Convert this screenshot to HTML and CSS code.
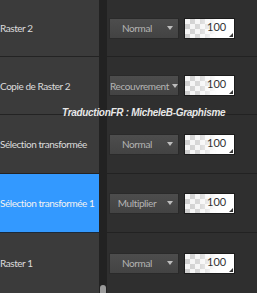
FILE: index.html
```html
<!DOCTYPE html>
<html lang="fr">
<head>
  <meta charset="UTF-8">
  <title>Calques</title>
  <link rel="stylesheet" href="styles.css">
</head>
<body>
  <div class="layers">
    <div class="names">
      <div class="name row1">Raster 2</div>
      <div class="name row2">Copie de Raster 2</div>
      <div class="name row3">Sélection transformée</div>
      <div class="name row4 selected">Sélection transformée 1</div>
      <div class="name row5">Raster 1</div>
    </div>

    <div class="strip">
      <div class="thumb"></div>
    </div>

    <div class="props">
      <div class="prop row1">
        <div class="blend"><span>Normal</span><i></i></div>
        <div class="opacity">100<b></b></div>
      </div>
      <div class="prop row2">
        <div class="blend"><span>Recouvrement</span><i></i></div>
        <div class="opacity">100<b></b></div>
      </div>
      <div class="prop row3">
        <div class="blend"><span>Normal</span><i></i></div>
        <div class="opacity">100<b></b></div>
      </div>
      <div class="prop row4">
        <div class="blend"><span>Multiplier</span><i></i></div>
        <div class="opacity">100<b></b></div>
      </div>
      <div class="prop row5">
        <div class="blend"><span>Normal</span><i></i></div>
        <div class="opacity">100<b></b></div>
      </div>
    </div>

    <div class="credit">TraductionFR : MicheleB-Graphisme</div>
  </div>
</body>
</html>
```

FILE: styles.css
```css
body {
  margin: 0;
  background-color: #2f2f2f;
  font-family: 'Lato', sans-serif;
  overflow: hidden;
}
.layers {
  position: relative;
  display: flex;
  width: 257px;
  height: 293px;
}
.names {
  width: 99px;
  background-color: #3b3b3b;
}
.strip {
  position: relative;
  width: 8px;
  background-color: #222;
}
.props {
  flex: 1;
  background-color: #2f2f2f;
}
.row1 { height: 56px; }
.row2 { height: 57px; }
.row3 { height: 58px; }
.row4 { height: 58px; }
.row5 { height: 60px; }

.name {
  display: flex;
  align-items: center;
  border-bottom: 1px solid #232323;
  color: #dcdcdc;
  font-size: 10px;
  letter-spacing: -0.45px;
  white-space: nowrap;
  overflow: hidden;
}
.name.row5, .prop.row5 {
  border-bottom: none;
}
.name.selected {
  background-color: #3399ff;
  color: #f2f2f2;
  border-bottom-color: #1b2a3a;
}
.prop {
  display: flex;
  align-items: center;
  gap: 5px;
  padding-left: 2px;
  border-bottom: 1px solid #222;
}
.blend {
  display: flex;
  align-items: center;
  width: 68px;
  height: 19px;
  border: 1px solid #2a2a2a;
  background: linear-gradient(#4d4d4d, #434343);
  color: #b4b4b4;
  font-size: 10px;
}
.blend span {
  flex: 1;
  text-align: center;
  white-space: nowrap;
  letter-spacing: -0.4px;
}
.blend i {
  width: 0;
  height: 0;
  margin: 0 5px 0 3px;
  border-left: 3.5px solid transparent;
  border-right: 3.5px solid transparent;
  border-top: 4px solid #bdbdbd;
}
.opacity {
  position: relative;
  box-sizing: border-box;
  width: 51px;
  height: 21px;
  padding: 1px 0 0 22px;
  border: 1px solid #1c1c1c;
  color: #333;
  font-size: 11px;
  line-height: 13px;
  background:
    linear-gradient(to right, rgba(255,255,255,0) 0%, rgba(255,255,255,0.2) 30%, #fff 65%),
    conic-gradient(#cfcfcf 25%, #f4f4f4 0 50%, #cfcfcf 0 75%, #f4f4f4 0) 0 0 / 10px 10px;
}
.opacity b {
  position: absolute;
  right: 1px;
  bottom: 1px;
  width: 0;
  height: 0;
  border-left: 4px solid transparent;
  border-bottom: 4px solid #333;
}
.thumb {
  position: absolute;
  left: 1px;
  bottom: 0;
  width: 6px;
  height: 8px;
  border-radius: 3px 3px 0 0;
  background-color: #9a9a9a;
}
.credit {
  position: absolute;
  left: 62px;
  top: 107px;
  color: #e8e8e8;
  font-family: 'Liberation Sans', sans-serif;
  font-size: 10px;
  font-weight: bold;
  font-style: italic;
  letter-spacing: -0.3px;
  white-space: nowrap;
}
```
